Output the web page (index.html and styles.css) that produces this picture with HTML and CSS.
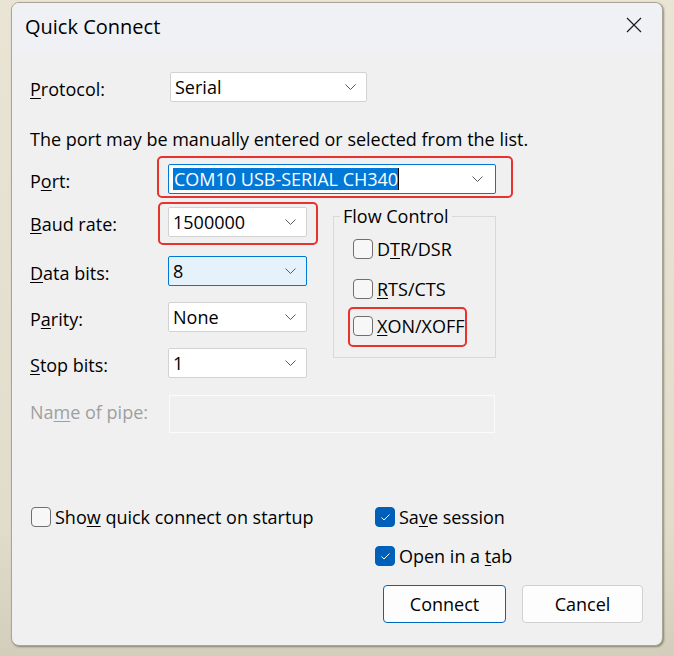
FILE: index.html
```html
<!DOCTYPE html>
<html>
<head>
<meta charset="utf-8">
<link rel="stylesheet" href="styles.css">
</head>
<body>
<div class="window">
  <div class="titlebar">
    <span class="title">Quick Connect</span>
    <span class="close"><svg width="16" height="16" viewBox="0 0 16 16"><path d="M1 1 L15 15 M15 1 L1 15" stroke="#1c1c1c" stroke-width="1.2" fill="none"/></svg></span>
  </div>
  <div class="content">
    <div class="form">
      <div class="lbl row-proto"><u>P</u>rotocol:</div>
      <div class="select proto row-proto"><span class="val">Serial</span><svg class="chev" width="11" height="6" viewBox="0 0 11 6"><path d="M0.5 0.5 L5.5 5.5 L10.5 0.5" stroke="#5a5a5a" fill="none"/></svg></div>

      <div class="info row-info">The port may be manually entered or selected from the list.</div>

      <div class="lbl row-port">P<u>o</u>rt:</div>
      <div class="annot port-wrap row-port">
        <div class="select port"><span class="hl">COM10 USB-SERIAL CH340</span><span class="caret"></span><svg class="chev" width="11" height="6" viewBox="0 0 11 6"><path d="M0.5 0.5 L5.5 5.5 L10.5 0.5" stroke="#5a5a5a" fill="none"/></svg></div>
        <span class="red red-port"></span>
      </div>

      <div class="lbl row-baud"><u>B</u>aud rate:</div>
      <div class="annot baud-wrap row-baud">
        <div class="select short"><span class="val">1500000</span><svg class="chev" width="11" height="6" viewBox="0 0 11 6"><path d="M0.5 0.5 L5.5 5.5 L10.5 0.5" stroke="#5a5a5a" fill="none"/></svg></div>
        <span class="red red-baud"></span>
      </div>

      <div class="group">
        <span class="legend">Flow Control</span>
        <div class="check-item dtr"><span class="box"></span><span>D<u>T</u>R/DSR</span></div>
        <div class="check-item rts"><span class="box"></span><span><u>R</u>TS/CTS</span></div>
        <div class="check-item xon"><span class="box"></span><span><u>X</u>ON/XOFF</span><span class="red red-xon"></span></div>
      </div>

      <div class="lbl row-data"><u>D</u>ata bits:</div>
      <div class="select short hover row-data"><span class="val">8</span><svg class="chev" width="11" height="6" viewBox="0 0 11 6"><path d="M0.5 0.5 L5.5 5.5 L10.5 0.5" stroke="#5a5a5a" fill="none"/></svg></div>

      <div class="lbl row-parity">P<u>a</u>rity:</div>
      <div class="select short row-parity"><span class="val">None</span><svg class="chev" width="11" height="6" viewBox="0 0 11 6"><path d="M0.5 0.5 L5.5 5.5 L10.5 0.5" stroke="#5a5a5a" fill="none"/></svg></div>

      <div class="lbl row-stop"><u>S</u>top bits:</div>
      <div class="select short row-stop"><span class="val">1</span><svg class="chev" width="11" height="6" viewBox="0 0 11 6"><path d="M0.5 0.5 L5.5 5.5 L10.5 0.5" stroke="#5a5a5a" fill="none"/></svg></div>

      <div class="lbl disabled row-pipe">Na<u>m</u>e of pipe:</div>
      <div class="pipe row-pipe"></div>
    </div>

    <div class="bottom">
      <div class="left-col">
        <div class="check-item"><span class="box"></span><span>Sho<u>w</u> quick connect on startup</span></div>
      </div>
      <div class="right-col">
        <div class="check-item"><span class="box checked"><svg width="11" height="9" viewBox="0 0 11 9"><path d="M1.5 4.5 L4 7 L9.5 1.5" stroke="#ffffff" stroke-width="1" fill="none"/></svg></span><span>Sa<u>v</u>e session</span></div>
        <div class="check-item"><span class="box checked"><svg width="11" height="9" viewBox="0 0 11 9"><path d="M1.5 4.5 L4 7 L9.5 1.5" stroke="#ffffff" stroke-width="1" fill="none"/></svg></span><span>Open in a <u>t</u>ab</span></div>
      </div>
    </div>

    <div class="buttons">
      <button class="btn primary">Connect</button>
      <button class="btn">Cancel</button>
    </div>
  </div>
</div>
</body>
</html>
```
FILE: styles.css
```css
html, body {
  margin: 0;
  padding: 0;
}
body {
  width: 674px;
  height: 656px;
  background: linear-gradient(180deg, #e9e4d4 0%, #e2dccb 80%, #d3cdbb 100%);
  font-family: "Open Sans", "Noto Sans", sans-serif;
  font-size: 18px;
  color: #000;
  overflow: hidden;
}
.window {
  margin-left: 11px;
  margin-top: 2px;
  width: 652px;
  height: 644px;
  box-sizing: border-box;
  border: 1px solid #a9a597;
  border-radius: 8px;
  background: #f0f0f0;
  box-shadow: 1px 1px 2px rgba(60, 55, 40, 0.5);
  overflow: hidden;
}
.titlebar {
  height: 49px;
  background: #eff1f5;
  display: flex;
  align-items: center;
  justify-content: space-between;
  padding: 0 20px 0 13px;
}
.title {
  font-size: 20px;
  margin-top: -3px;
}
.close {
  display: flex;
  margin-top: -5px;
}
.content {
  padding: 20px 19px 0 19px;
}
.form {
  display: grid;
  grid-template-columns: 137px 165px 163px;
  grid-template-rows: 55px 37px 43px 49px 46px 46px 47px 38px;
  align-items: start;
}
.row-proto { grid-row: 1; }
.row-info { grid-row: 2; }
.row-port { grid-row: 3; }
.row-baud { grid-row: 4; }
.row-data { grid-row: 5; }
.row-parity { grid-row: 6; }
.row-stop { grid-row: 7; }
.row-pipe { grid-row: 8; }

.lbl {
  grid-column: 1;
  height: 30px;
  line-height: 30px;
  padding-top: 2px;
  margin-left: -1px;
  white-space: nowrap;
}
.lbl.disabled { color: #9f9f9f; }
u { text-decoration-thickness: 1px; text-underline-offset: 2px; }

.info {
  grid-column: 1 / 4;
  margin-left: -1px;
  line-height: 24px;
  white-space: nowrap;
}
.select {
  grid-column: 2;
  height: 30px;
  box-sizing: border-box;
  border: 1px solid #d2d2d2;
  border-radius: 2px;
  background: #ffffff;
  display: flex;
  align-items: center;
  justify-content: space-between;
  padding: 0 10px 0 4px;
  position: relative;
}
.select.proto {
  grid-column: 2 / 4;
  width: 197px;
  margin-left: 2px;
}
.select.short { width: 139px; }
.select.hover {
  background: #e5f1fb;
  border-color: #0078d7;
}
.val { line-height: 28px; }
.chev { flex: none; }

.annot { position: relative; }
.port-wrap { grid-column: 2 / 4; width: 328px; }
.baud-wrap { grid-column: 2; width: 139px; }
.select.port {
  border-color: #0078d7;
  justify-content: flex-start;
  padding-right: 12px;
}
.select.port .chev { margin-left: auto; }
.hl {
  background: #0078d7;
  color: #fff;
  line-height: 22px;
  padding: 0 0 0 1px;
}
.caret {
  width: 1px;
  height: 22px;
  background: #000;
}
.red {
  position: absolute;
  border: 2px solid #e9322e;
  border-radius: 5px;
  box-sizing: border-box;
  pointer-events: none;
}
.red-port { left: -11px; top: -8px; width: 356px; height: 42px; }
.red-baud { left: -10px; top: -5px; width: 160px; height: 43px; }
.red-xon { left: -5px; top: -9px; width: 119px; height: 40px; }

.group {
  grid-column: 3;
  grid-row: 4 / 8;
  margin-top: 9px;
  height: 142px;
  box-sizing: border-box;
  border: 1px solid #d9d9d9;
  position: relative;
  padding: 22px 0 0 19px;
}
.legend {
  position: absolute;
  left: 6px;
  top: -13px;
  line-height: 24px;
  padding: 0 3px;
  background: #f0f0f0;
}
.check-item {
  display: flex;
  align-items: center;
  height: 20px;
  gap: 4px;
  position: relative;
  white-space: nowrap;
}
.check-item.rts { margin-top: 20px; }
.check-item.xon { margin-top: 17px; width: fit-content; }
.box {
  width: 20px;
  height: 20px;
  box-sizing: border-box;
  border: 1px solid #6f6f6f;
  border-radius: 4px;
  background: #f7f7f7;
  flex: none;
  display: flex;
  align-items: center;
  justify-content: center;
}
.box.checked {
  background: #005fb8;
  border-color: #005fb8;
}
.pipe {
  grid-column: 2 / 4;
  width: 326px;
  height: 38px;
  margin-left: 1px;
  box-sizing: border-box;
  border: 1px solid #fbfbfb;
  background: #f0f0f0;
}
.bottom {
  display: flex;
  margin-top: 74px;
}
.left-col { width: 344px; }
.right-col {
  display: flex;
  flex-direction: column;
  gap: 19px;
}
.buttons {
  display: flex;
  justify-content: flex-end;
  gap: 16px;
  margin-top: 19px;
}
.btn {
  font-family: inherit;
  font-size: 18px;
  height: 38px;
  width: 121px;
  background: #fdfdfd;
  border: 1px solid #d0d0d0;
  border-radius: 4px;
  color: #000;
  padding: 0;
}
.btn.primary {
  width: 123px;
  border-color: #0067c0;
}
```
